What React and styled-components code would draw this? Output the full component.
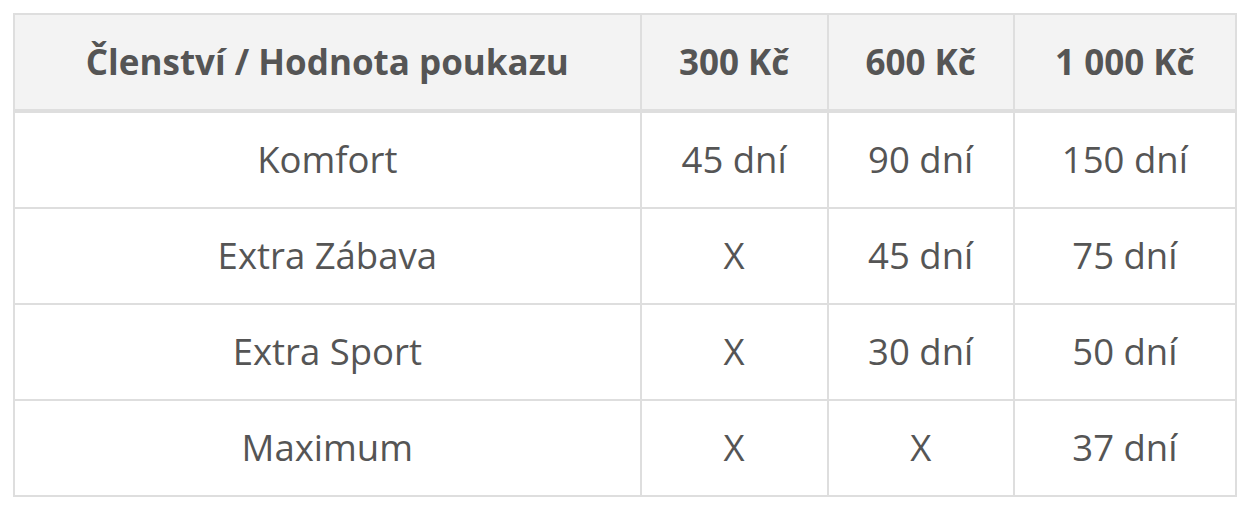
import React from "react";
import styled, { createGlobalStyle } from "styled-components";

const Global = createGlobalStyle`
  html, body { margin: 0; padding: 0; background: #fff; }
  body { font-family: "Open Sans", "Noto Sans", sans-serif; }
`;

const Wrap = styled.div`
  padding: 13px 0 0 13px;
`;

const Table = styled.table`
  border-collapse: collapse;
  table-layout: fixed;
  width: 1224px;
  color: #555;
  border: 2px solid #dedede;
`;

const Col = styled.col`
  width: ${(p) => p.$w}px;
`;

const Head = styled.thead`
  background: #f3f3f3;
`;

const Th = styled.th`
  height: 92px;
  padding: 0 0 2px;
  font-size: 35px;
  font-weight: 700;
  text-align: center;
  border: 2px solid #dedede;
  border-bottom: 4px solid #dedede;
`;

const Td = styled.td`
  height: 91px;
  padding: 0 0 3px;
  font-size: 36.5px;
  font-weight: 400;
  text-align: center;
  border: 2px solid #dedede;
`;

const cols = [
  { label: "Členství / Hodnota poukazu", w: 623 },
  { label: "300 Kč", w: 186 },
  { label: "600 Kč", w: 185 },
  { label: "1 000 Kč", w: 221 },
];

const rows = [
  ["Komfort", "45 dní", "90 dní", "150 dní"],
  ["Extra Zábava", "X", "45 dní", "75 dní"],
  ["Extra Sport", "X", "30 dní", "50 dní"],
  ["Maximum", "X", "X", "37 dní"],
];

export default function App() {
  return (
    <Wrap>
      <Global />
      <Table>
        <colgroup>
          {cols.map((c) => (
            <Col key={c.label} $w={c.w} />
          ))}
        </colgroup>
        <Head>
          <tr>
            {cols.map((c) => (
              <Th key={c.label}>{c.label}</Th>
            ))}
          </tr>
        </Head>
        <tbody>
          {rows.map((r) => (
            <tr key={r[0]}>
              {r.map((v, i) => (
                <Td key={i}>{v}</Td>
              ))}
            </tr>
          ))}
        </tbody>
      </Table>
    </Wrap>
  );
}
